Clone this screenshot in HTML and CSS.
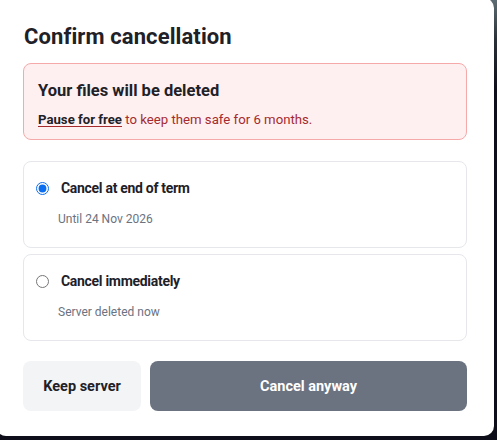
FILE: index.html
```html
<!DOCTYPE html>
<html lang="en">
<head>
<meta charset="utf-8">
<title>Confirm cancellation</title>
<link rel="stylesheet" href="styles.css">
</head>
<body>
<div class="modal">
  <h1 class="title">Confirm cancellation</h1>
  <div class="alert">
    <div class="alert-title">Your files will be deleted</div>
    <div class="alert-text"><a class="alert-link" href="#">Pause for free</a> to keep them safe for 6 months.</div>
  </div>
  <label class="option">
    <span class="option-head">
      <input class="radio" type="radio" name="when" checked>
      <span class="option-label">Cancel at end of term</span>
    </span>
    <span class="option-sub">Until 24 Nov 2026</span>
  </label>
  <label class="option">
    <span class="option-head">
      <input class="radio" type="radio" name="when">
      <span class="option-label">Cancel immediately</span>
    </span>
    <span class="option-sub">Server deleted now</span>
  </label>
  <div class="actions">
    <button class="btn btn-keep">Keep server</button>
    <button class="btn btn-cancel">Cancel anyway</button>
  </div>
</div>
</body>
</html>
```
FILE: styles.css
```css
html, body {
  margin: 0;
  padding: 0;
}
body {
  width: 497px;
  height: 440px;
  overflow: hidden;
  background: linear-gradient(180deg, #5d6c72 0px, #2a3038 40px, #0e0e1a 90px, #0e0e1a 100%);
  font-family: Roboto, "Noto Sans", sans-serif;
  color: #1f2128;
}
.modal {
  box-sizing: border-box;
  width: 498px;
  height: 438px;
  margin: -2px 0 0 -4px;
  padding: 25px 27px 0 27px;
  background: #ffffff;
  border-radius: 10px;
}
.title {
  margin: 0 0 0 1px;
  font-size: 22px;
  line-height: 28px;
  font-weight: 700;
  color: #1f2128;
  letter-spacing: 0.1px;
}
.alert {
  margin-top: 12px;
  padding: 16px 14px 10px 14px;
  background: #fef0f0;
  border: 1px solid #f6a9a9;
  border-radius: 8px;
}
.alert-title {
  font-size: 16.5px;
  line-height: 22px;
  font-weight: 700;
  color: #1f2128;
}
.alert-text {
  margin-top: 9px;
  font-size: 13.2px;
  line-height: 18px;
  color: #a52a2e;
}
.alert-link {
  color: #1f2128;
  font-weight: 700;
  text-decoration: underline;
  text-decoration-color: #a52a2e;
  text-underline-offset: 2px;
}
.option {
  display: flex;
  flex-direction: column;
  margin-top: 21px;
  padding: 16px 12px 20px 12px;
  border: 1px solid #e5e7eb;
  border-radius: 8px;
  cursor: pointer;
}
.option + .option {
  margin-top: 6px;
}
.option-head {
  display: flex;
  align-items: center;
  gap: 12px;
}
.radio {
  width: 13px;
  height: 13px;
  margin: 0;
  accent-color: #0b6df0;
}
.option-label {
  font-size: 14px;
  line-height: 20px;
  font-weight: 700;
  color: #1f2128;
  letter-spacing: -0.3px;
}
.option-sub {
  margin: 13px 0 0 22px;
  font-size: 12px;
  line-height: 16px;
  color: #6b7280;
}
.actions {
  display: flex;
  gap: 9px;
  margin-top: 20px;
}
.btn {
  height: 50px;
  border: none;
  border-radius: 8px;
  font-family: inherit;
  font-size: 14.5px;
  font-weight: 700;
  cursor: pointer;
}
.btn-keep {
  width: 118px;
  background: #f3f4f6;
  color: #1f2128;
}
.btn-cancel {
  flex: 1;
  background: #6b7280;
  color: #ffffff;
}
```
